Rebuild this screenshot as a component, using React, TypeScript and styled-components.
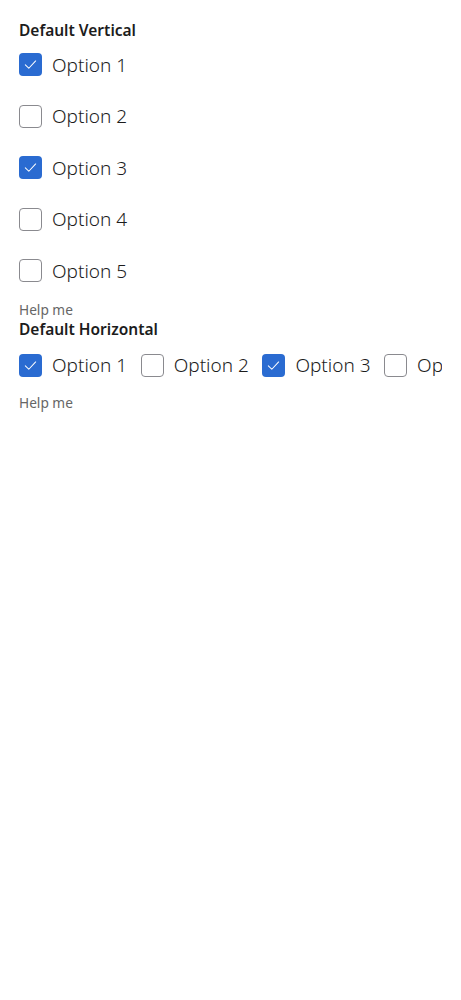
import React, { useState } from "react";
import styled, { createGlobalStyle } from "styled-components";

const GlobalStyle = createGlobalStyle`
  html, body {
    margin: 0;
    padding: 0;
    background: #ffffff;
  }
  body {
    font-family: "Noto Sans", "Open Sans", sans-serif;
    color: #1c1c1c;
  }
`;

const Page = styled.div`
  padding: 20px 19px 0 19px;
  width: 461px;
  box-sizing: border-box;
`;

const Group = styled.fieldset`
  border: 0;
  margin: 0;
  padding: 0;
  min-width: 0;
`;

const Legend = styled.legend`
  padding: 0;
  font-size: 15.5px;
  font-weight: 600;
  line-height: 20px;
  color: #1c1c1c;
`;

const Options = styled.div<{ $horizontal?: boolean }>`
  display: flex;
  flex-direction: ${(p) => (p.$horizontal ? "row" : "column")};
  gap: ${(p) => (p.$horizontal ? "13.5px" : "28.6px")};
  overflow: hidden;
  white-space: nowrap;
  margin-top: ${(p) => (p.$horizontal ? "15px" : "13px")};
`;

const Item = styled.label`
  display: flex;
  align-items: center;
  gap: 10px;
  height: 23px;
  flex-shrink: 0;
  cursor: pointer;
`;

const Box = styled.span<{ $checked: boolean }>`
  width: 23px;
  height: 23px;
  box-sizing: border-box;
  border-radius: 4px;
  flex-shrink: 0;
  display: flex;
  align-items: center;
  justify-content: center;
  background: ${(p) => (p.$checked ? "#2a6bd1" : "#ffffff")};
  border: ${(p) => (p.$checked ? "none" : "1.5px solid #8a8a8f")};
`;

const Text = styled.span`
  font-size: 19px;
  font-weight: 300;
  line-height: 24px;
  color: #1c1c1c;
`;

const Help = styled.div<{ $horizontal?: boolean }>`
  font-size: 13.7px;
  line-height: 18px;
  color: #666;
  margin-top: ${(p) => (p.$horizontal ? "17px" : "18.5px")};
`;

const Check = () => (
  <svg width="15" height="15" viewBox="0 0 16 16" fill="none">
    <path d="M2.5 8.3 L6.2 12 L13.5 4.2" stroke="#fff" strokeWidth="1.1" strokeLinecap="round" strokeLinejoin="round" />
  </svg>
);

const options = ["Option 1", "Option 2", "Option 3", "Option 4", "Option 5"];

function CheckboxGroup({ title, horizontal }: { title: string; horizontal?: boolean }) {
  const [checked, setChecked] = useState<boolean[]>([true, false, true, false, false]);
  return (
    <Group>
      <Legend>{title}</Legend>
      <Options $horizontal={horizontal}>
        {options.map((o, i) => (
          <Item key={o} onClick={() => setChecked((c) => c.map((v, j) => (j === i ? !v : v)))}>
            <Box $checked={checked[i]}>{checked[i] && <Check />}</Box>
            <Text>{o}</Text>
          </Item>
        ))}
      </Options>
      <Help $horizontal={horizontal}>Help me</Help>
    </Group>
  );
}

export default function App() {
  return (
    <>
      <GlobalStyle />
      <Page>
        <CheckboxGroup title="Default Vertical" />
        <CheckboxGroup title="Default Horizontal" horizontal />
      </Page>
    </>
  );
}
